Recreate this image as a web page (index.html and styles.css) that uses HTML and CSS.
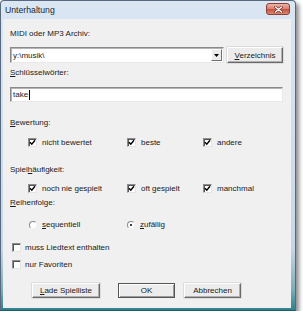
FILE: index.html
```html
<!DOCTYPE html>
<html lang="de">
<head>
    <meta charset="UTF-8">
    <title>Unterhaltung</title>
    <link rel="stylesheet" href="styles.css">
</head>
<body>
<div class="window">
    <div class="titlebar">
        <span class="title">Unterhaltung</span>
        <span class="close">
            <svg width="9" height="7" viewBox="0 0 9 7"><path d="M1.5 1 L7.5 6 M7.5 1 L1.5 6" stroke="#6b2a22" stroke-width="2.6" stroke-linecap="round"/><path d="M1.5 1 L7.5 6 M7.5 1 L1.5 6" stroke="#fff" stroke-width="1.4" stroke-linecap="round"/></svg>
        </span>
    </div>

    <div class="client">
        <div class="label first">MIDI oder MP3 Archiv:</div>
        <div class="path-row">
            <div class="combo">
                <span class="value">y:\musik\</span>
                <span class="drop"><svg width="5" height="3" viewBox="0 0 5 3"><path d="M0 0 H5 L2.5 3 Z" fill="#000"/></svg></span>
            </div>
            <button class="btn browse"><u>V</u>erzeichnis</button>
        </div>

        <div class="label keys"><u>S</u>chlüsselwörter:</div>
        <div class="field"><span class="value">take</span><span class="caret"></span></div>

        <div class="label rating"><u>B</u>ewertung:</div>
        <div class="options row-rating">
            <label class="opt"><span class="box checked"><svg width="7" height="7" viewBox="0 0 7 7"><path d="M1 3.2 L2.8 5.2 L6 1.2" fill="none" stroke="#000" stroke-width="1.4"/></svg></span><span>nicht bewertet</span></label>
            <label class="opt"><span class="box checked"><svg width="7" height="7" viewBox="0 0 7 7"><path d="M1 3.2 L2.8 5.2 L6 1.2" fill="none" stroke="#000" stroke-width="1.4"/></svg></span><span>beste</span></label>
            <label class="opt"><span class="box checked"><svg width="7" height="7" viewBox="0 0 7 7"><path d="M1 3.2 L2.8 5.2 L6 1.2" fill="none" stroke="#000" stroke-width="1.4"/></svg></span><span>andere</span></label>
        </div>

        <div class="label played">Spiel<u>h</u>äufigkeit:</div>
        <div class="options row-played">
            <label class="opt"><span class="box checked"><svg width="7" height="7" viewBox="0 0 7 7"><path d="M1 3.2 L2.8 5.2 L6 1.2" fill="none" stroke="#000" stroke-width="1.4"/></svg></span><span>noch nie gespielt</span></label>
            <label class="opt"><span class="box checked"><svg width="7" height="7" viewBox="0 0 7 7"><path d="M1 3.2 L2.8 5.2 L6 1.2" fill="none" stroke="#000" stroke-width="1.4"/></svg></span><span>oft gespielt</span></label>
            <label class="opt"><span class="box checked"><svg width="7" height="7" viewBox="0 0 7 7"><path d="M1 3.2 L2.8 5.2 L6 1.2" fill="none" stroke="#000" stroke-width="1.4"/></svg></span><span>manchmal</span></label>
        </div>

        <div class="label order"><u>R</u>eihenfolge:</div>
        <div class="options radios">
            <label class="opt"><span class="radio"></span><span><u>s</u>equentiell</span></label>
            <label class="opt"><span class="radio selected"></span><span><u>z</u>ufällig</span></label>
        </div>

        <label class="opt single lyrics"><span class="box"></span><span>muss Liedtext enthalten</span></label>
        <label class="opt single favs"><span class="box"></span><span>nur Favoriten</span></label>

        <div class="buttons">
            <button class="btn load"><u>L</u>ade Spielliste</button>
            <button class="btn ok">OK</button>
            <button class="btn cancel">Abbrechen</button>
        </div>
    </div>
</div>
</body>
</html>
```

FILE: styles.css
```css
body {
    margin: 0;
    background: #fff;
    font-family: "Liberation Sans", Arial, sans-serif;
    font-size: 8px;
    color: #1a1a1a;
}

/* window frame (Win7 basic look) */
.window {
    width: 296px;
    height: 311px;
    box-sizing: border-box;
    border: 1px solid #58697e;
    border-bottom-color: #1f5c66;
    border-radius: 4px 4px 0 0;
    padding: 0 4px 2px 2px;
    display: flex;
    flex-direction: column;
    background: linear-gradient(#dbe6f3, #c6d6ea 80%, #7fb0bb 93%, #2f808d);
    box-shadow: 3px 3px 4px rgba(0, 0, 0, 0.45);
}

.titlebar {
    height: 18px;
    display: flex;
    align-items: center;
    justify-content: space-between;
    padding-left: 2px;
}

.title {
    font-size: 8.7px;
    color: #1b2533;
}

.close {
    width: 24px;
    height: 12px;
    align-self: flex-start;
    margin-top: 2px;
    margin-right: 1px;
    box-sizing: border-box;
    border: 1px solid #8c4035;
    border-radius: 3px;
    background: linear-gradient(#eeb3a6, #d9816f 48%, #c5503e 52%, #d98a74);
    display: flex;
    align-items: center;
    justify-content: center;
}

.client {
    flex: 1;
    background: #f0f0f0;
    padding: 0 8px 0 7px;
    display: flex;
    flex-direction: column;
}

.label {
    line-height: 10px;
    height: 10px;
}

u {
    text-decoration: underline;
    text-underline-offset: 1px;
}

.first { margin-top: 10px; }
.keys { margin-top: 5px; }
.rating { margin-top: 16px; }
.played { margin-top: 17px; }
.order { margin-top: 4px; }

/* archive path */
.path-row {
    display: flex;
    gap: 3px;
    margin-top: 8px;
    height: 16px;
}

.combo {
    width: 214px;
    box-sizing: border-box;
    background: #fff;
    border: 1px solid;
    border-color: #8a8a8a #e8e8e8 #e8e8e8 #8a8a8a;
    box-shadow: inset 1px 1px 0 #b4b4b4;
    display: flex;
    align-items: center;
    justify-content: space-between;
    padding-left: 2px;
}

.drop {
    width: 11px;
    height: 12px;
    box-sizing: border-box;
    margin-right: 1px;
    background: #ececec;
    border: 1px solid;
    border-color: #fff #707070 #707070 #fff;
    display: flex;
    align-items: center;
    justify-content: center;
}

.field {
    margin-top: 9px;
    height: 15px;
    box-sizing: border-box;
    background: #fff;
    border: 1px solid;
    border-color: #8a8a8a #e8e8e8 #e8e8e8 #8a8a8a;
    box-shadow: inset 1px 1px 0 #b4b4b4;
    display: flex;
    align-items: center;
    padding-left: 2px;
}

.caret {
    width: 0;
    height: 10px;
    border-left: 1px solid #000;
    margin-left: 1px;
}

/* checkbox and radio rows */
.options {
    display: grid;
    grid-template-columns: 99px 76px auto;
    padding-left: 18px;
    height: 11px;
}

.row-rating { margin-top: 9px; }
.row-played { margin-top: 8px; }

.radios {
    grid-template-columns: 98px auto;
    padding-left: 19px;
    margin-top: 11px;
}

.opt {
    display: flex;
    align-items: center;
    gap: 5px;
    line-height: 11px;
    height: 11px;
}

.box {
    width: 9px;
    height: 9px;
    box-sizing: border-box;
    background: #fff;
    border: 1px solid;
    border-color: #8c8c8c #e4e4e4 #e4e4e4 #8c8c8c;
    box-shadow: inset 1px 1px 0 #555;
    display: flex;
    align-items: center;
    justify-content: center;
}

.radio {
    width: 8px;
    height: 8px;
    box-sizing: border-box;
    border-radius: 50%;
    background: #fff;
    border: 1px solid;
    border-color: #8c8c8c #f4f4f4 #f4f4f4 #8c8c8c;
    display: flex;
    align-items: center;
    justify-content: center;
}

.radio.selected::after {
    content: "";
    width: 2px;
    height: 2px;
    border-radius: 50%;
    background: #000;
}

.single {
    padding-left: 2px;
    gap: 4px;
}

.lyrics { margin-top: 12px; }
.favs { margin-top: 6px; }

/* push buttons */
.btn {
    font-family: "Liberation Sans", Arial, sans-serif;
    font-size: 8px;
    color: #1a1a1a;
    height: 15px;
    padding: 0;
    box-sizing: border-box;
    background: #ececec;
    border: 1px solid;
    border-color: #fff #6a6a6a #6a6a6a #fff;
    box-shadow: inset -1px -1px 0 #b0b0b0, 0 0 0 0.5px #c8c8c8;
}

.browse {
    width: 56px;
    height: 16px;
}

.buttons {
    display: flex;
    margin-top: 13px;
    padding-left: 22px;
}

.load { width: 68px; }

.ok {
    width: 57px;
    margin-left: 18px;
    border-color: #555;
    box-shadow: inset 1px 1px 0 #fff, inset -1px -1px 0 #9a9a9a;
}

.cancel {
    width: 57px;
    margin-left: 9px;
}
```
